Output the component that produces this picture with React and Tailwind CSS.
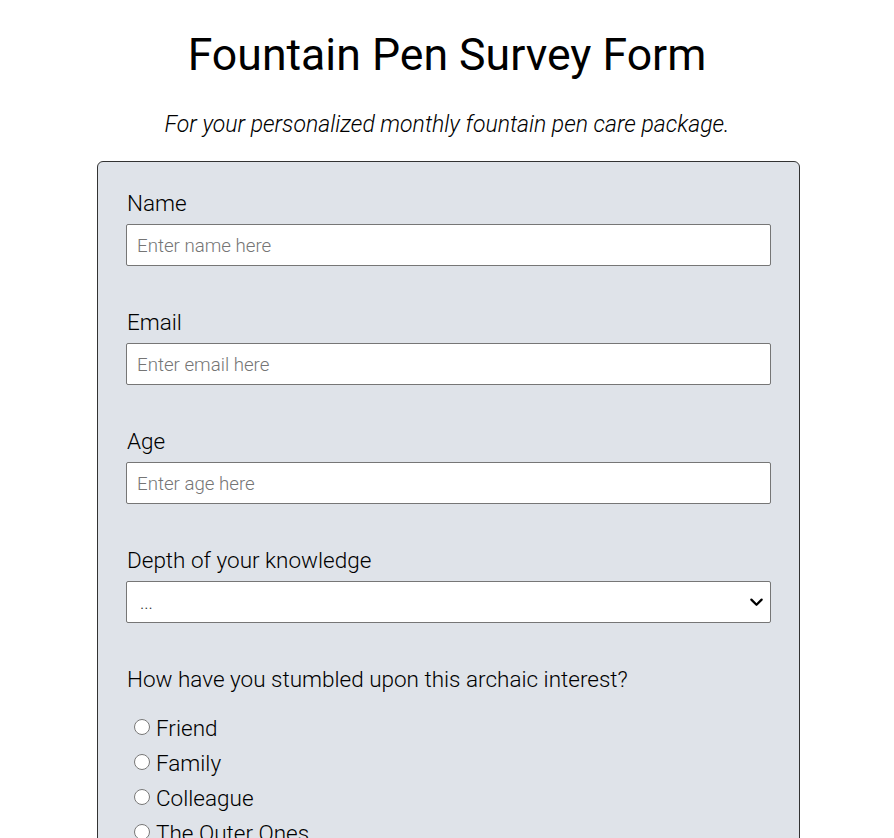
import React from 'react';

const fields = [
  { id: 'name', label: 'Name', type: 'text', placeholder: 'Enter name here' },
  { id: 'email', label: 'Email', type: 'email', placeholder: 'Enter email here' },
  { id: 'age', label: 'Age', type: 'number', placeholder: 'Enter age here' },
];

const sources = ['Friend', 'Family', 'Colleague', 'The Outer Ones'];

const App = () => {
  return (
    <div className="min-h-screen bg-white text-black font-['Roboto',sans-serif] font-light">
      <h1 className="text-center text-[44.6px] leading-[54px] pt-[28px] font-normal">
        Fountain Pen Survey Form
      </h1>
      <p className="text-center italic text-[23px] leading-[30px] mt-[28px]">
        For your personalized monthly fountain pen care package.
      </p>

      <div className="flex justify-center pl-[3px]">
        <form className="mt-[21px] w-[703px] bg-[#dfe3e9] border border-[#333] rounded-[6px] px-[28px] pt-[27px] pb-[40px]">
          {fields.map((f) => (
            <div key={f.id} className="mb-[42px]">
              <label htmlFor={f.id} className="block text-[22.5px] leading-[28px] mb-[7px] pl-[1px]">
                {f.label}
              </label>
              <input
                id={f.id}
                type={f.type}
                placeholder={f.placeholder}
                className="block w-full h-[42px] bg-white border border-[#767676] rounded-[2px] px-[10px] pt-[2px] text-[18.7px] font-light placeholder:text-[#757575] outline-none"
              />
            </div>
          ))}

          <div className="mb-[42px]">
            <label htmlFor="depth" className="block text-[22.5px] leading-[28px] mb-[7px] pl-[1px]">
              Depth of your knowledge
            </label>
            <div className="relative">
              <select
                id="depth"
                defaultValue=""
                className="block w-full h-[42px] appearance-none bg-white border border-[#767676] rounded-[2px] pl-[13px] text-[18px] text-[#333] font-light outline-none"
              >
                <option value="">...</option>
                <option value="novice">Novice</option>
                <option value="enthusiast">Enthusiast</option>
                <option value="expert">Expert</option>
              </select>
              <svg
                className="pointer-events-none absolute right-[7px] top-1/2 -translate-y-1/2 w-[15px] h-[15px]"
                viewBox="0 0 16 16"
                fill="none"
                stroke="#000"
                strokeWidth="2.4"
                strokeLinecap="round"
                strokeLinejoin="round"
              >
                <path d="M2.5 5.5 8 11l5.5-5.5" />
              </svg>
            </div>
          </div>

          <p className="text-[22.5px] leading-[28px] pl-[1px] mb-[21px]">
            How have you stumbled upon this archaic interest?
          </p>
          <div className="flex flex-col gap-[7px] pl-[8px]">
            {sources.map((s) => (
              <label key={s} className="flex items-center text-[22.5px] leading-[28px]">
                <input
                  type="radio"
                  name="source"
                  value={s}
                  className="w-[16px] h-[16px] mr-[6px] mb-[3px] accent-[#555]"
                />
                {s}
              </label>
            ))}
          </div>
        </form>
      </div>
    </div>
  );
};

export default App;
